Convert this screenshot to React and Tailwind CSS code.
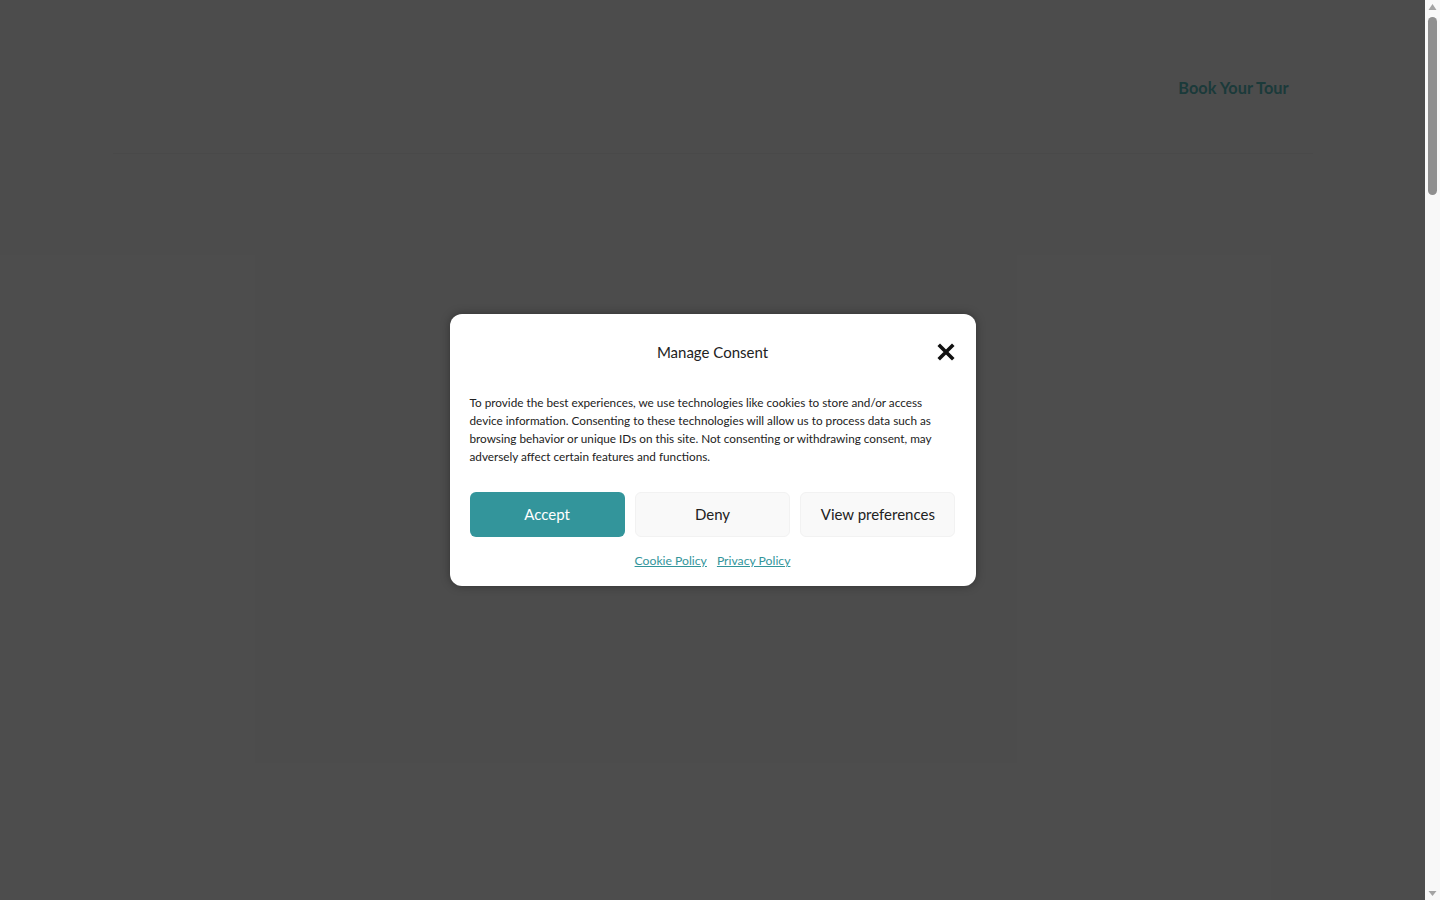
import { useState } from 'react'

const CloseIcon = () => (
  <svg width="18" height="18" viewBox="0 0 18 18" fill="none">
    <path d="M3 3L15 15M15 3L3 15" stroke="#111" strokeWidth="3.6" strokeLinecap="square" />
  </svg>
)

const Arrow = ({ down }) => (
  <svg width="15" height="14" viewBox="0 0 15 14">
    <path d={down ? 'M3.5 5H11.5L7.5 10Z' : 'M3.5 10H11.5L7.5 4Z'} fill="#a3a3a3" />
  </svg>
)

// fake browser scrollbar, the screenshot shows one
const ScrollBar = () => (
  <div className="w-[15px] h-screen bg-[#f8f8f8] flex flex-col items-center">
    <Arrow />
    <div className="mt-[3px] w-[9px] h-[178px] rounded-full bg-[#8f8f8f]" />
    <div className="flex-1" />
    <Arrow down />
  </div>
)

const ConsentModal = ({ onClose }) => (
  <div className="w-[526px] bg-white rounded-xl px-5 pt-5 pb-[16px] shadow-[0_0_10px_rgba(0,0,0,0.35)] flex flex-col">
    {/* Header */}
    <div className="relative h-[36px] flex items-center justify-center">
      <h2 className="text-[15px] text-[#222]">Manage Consent</h2>
      <button onClick={onClose} className="absolute right-[1px] top-[9px]">
        <CloseIcon />
      </button>
    </div>

    <p className="mt-[24px] text-[11.75px] leading-[18px] text-[#222]">
      To provide the best experiences, we use technologies like cookies to store and/or access device information. Consenting to these technologies will allow us to process data such as browsing behavior or unique IDs on this site. Not consenting or withdrawing consent, may adversely affect certain features and functions.
    </p>

    {/* Buttons */}
    <div className="mt-[26px] grid grid-cols-3 gap-[10px]">
      <button className="h-[45px] rounded-md bg-[#33959b] text-white text-[15px]">Accept</button>
      <button className="h-[45px] rounded-md bg-[#f9f9f9] border border-[#f2f2f2] text-[#222] text-[15px]">Deny</button>
      <button className="h-[45px] rounded-md bg-[#f9f9f9] border border-[#f2f2f2] text-[#222] text-[15px]">View preferences</button>
    </div>

    <div className="mt-[15px] flex justify-center gap-[10px] text-[12.2px] leading-[18px]">
      <a href="#" className="text-[#33959b] underline">Cookie Policy</a>
      <a href="#" className="text-[#33959b] underline">Privacy Policy</a>
    </div>
  </div>
)

export default function App() {
  const [open, setOpen] = useState(true)

  return (
    <div className="h-screen flex overflow-hidden font-['Lato','Liberation_Sans',sans-serif]">
      <main className="relative flex-1 h-screen overflow-hidden bg-white">
        <div className="h-[4400px]">
          <header className="max-w-[1200px] mx-auto h-[154px] flex items-start justify-end pt-[76px] pr-6 border-b border-gray-100">
            <a href="#" className="text-[16.3px] font-bold text-[#5cc2c2] leading-6">Book Your Tour</a>
          </header>
        </div>

        {open && (
          <div className="absolute inset-0 bg-black/70 flex items-center justify-center z-50">
            <ConsentModal onClose={() => setOpen(false)} />
          </div>
        )}
      </main>
      <ScrollBar />
    </div>
  )
}
